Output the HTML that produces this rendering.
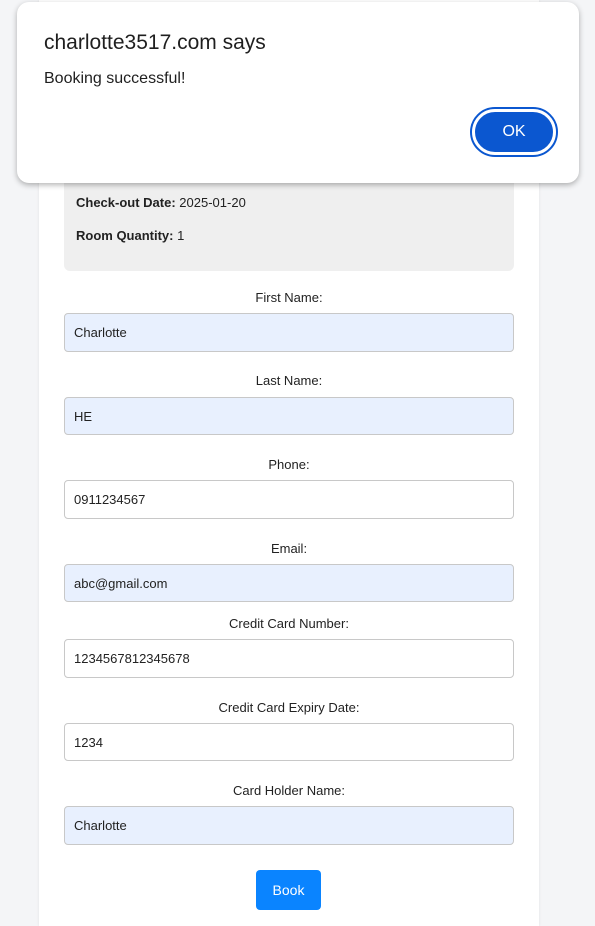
<!DOCTYPE html>
<html><head><style>
body{margin:0;width:595px;height:926px;background:#f4f5f7;font-family:"Liberation Sans",sans-serif;position:relative;overflow:hidden}
.card{position:absolute;left:39px;top:0;width:500px;height:926px;background:#fff;box-shadow:0 0 3px rgba(0,0,0,.08)}
.gray{position:absolute;left:64px;top:150px;width:450px;height:121px;background:#efefef;border-radius:6px}
.t{position:absolute;left:76px;font-size:13px;color:#222}
.t b{font-weight:bold;color:#222}
.lbl{position:absolute;left:64px;width:450px;text-align:center;font-size:13px;color:#222}
.in{position:absolute;left:64px;width:450px;border:1px solid #c8c8c8;border-radius:4px;font-size:13px;color:#222;box-sizing:border-box;padding-left:9px;display:flex;align-items:center;background:#fff}
.in.f{background:#e8f0fe}
.btn{position:absolute;left:256px;top:870px;width:65px;height:40px;background:#0a84ff;border-radius:4px;color:#fff;font-size:14px;display:flex;align-items:center;justify-content:center}
.dlg{position:absolute;left:17px;top:2px;width:562px;height:181px;background:#fff;border-radius:12px;box-shadow:0 2px 6px rgba(0,0,0,.3)}
.ok{position:absolute;left:472px;top:109px;width:84px;height:46px;box-sizing:border-box;border-radius:24px;background:#0b57d0;border:3px solid #fff;outline:2px solid #0b57d0;color:#fff;font-size:16px;display:flex;align-items:center;justify-content:center}
</style></head><body>
<div class="card"></div>
<div class="gray"></div>
<div class="t" style="top:195px"><b>Check-out Date:</b> 2025-01-20</div>
<div class="t" style="top:228px"><b>Room Quantity:</b> 1</div>
<div class="lbl" style="top:290px">First Name:</div>
<div class="in f" style="top:313px;height:39px">Charlotte</div>
<div class="lbl" style="top:373px">Last Name:</div>
<div class="in f" style="top:397px;height:38px">HE</div>
<div class="lbl" style="top:457px">Phone:</div>
<div class="in" style="top:480px;height:39px">0911234567</div>
<div class="lbl" style="top:541px">Email:</div>
<div class="in f" style="top:564px;height:38px">abc@gmail.com</div>
<div class="lbl" style="top:616px">Credit Card Number:</div>
<div class="in" style="top:639px;height:39px">1234567812345678</div>
<div class="lbl" style="top:700px">Credit Card Expiry Date:</div>
<div class="in" style="top:723px;height:38px">1234</div>
<div class="lbl" style="top:783px">Card Holder Name:</div>
<div class="in f" style="top:806px;height:39px">Charlotte</div>
<div class="btn">Book</div>
<div class="dlg">
<div style="position:absolute;left:27px;top:29px;font-size:21px;color:#1f1f1f">charlotte3517.com says</div>
<div style="position:absolute;left:27px;top:68px;font-size:16px;color:#1f1f1f">Booking successful!</div>
</div>
<div class="ok">OK</div>
</body></html>
